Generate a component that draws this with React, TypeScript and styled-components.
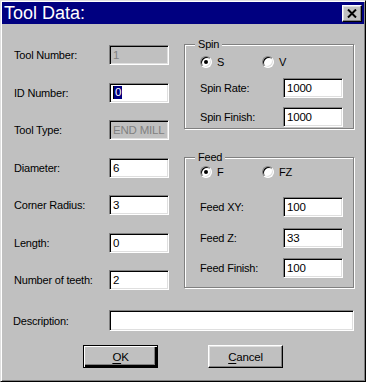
import * as React from "react";
import styled, { createGlobalStyle } from "styled-components";

const GlobalStyle = createGlobalStyle`
  html, body {
    margin: 0;
    padding: 0;
    background: #c0c0c0;
  }
`;

const uiFont = `"Liberation Sans", Arial, sans-serif`;

const Window = styled.div`
  box-sizing: border-box;
  width: 366px;
  height: 382px;
  display: flex;
  flex-direction: column;
  background: #c0c0c0;
  border: 1px solid;
  border-color: #dfdfdf #000 #000 #dfdfdf;
  box-shadow: inset 1px 1px #fff, inset -1px -1px #808080;
  padding: 1px;
  font-family: ${uiFont};
  font-size: 11px;
  letter-spacing: -0.2px;
  color: #000;
`;

const TitleBar = styled.div`
  height: 22px;
  background: #000080;
  display: flex;
  align-items: center;
  justify-content: space-between;
  padding: 0 2px 0 2px;
`;

const Title = styled.span`
  font-size: 18px;
  letter-spacing: 0;
  color: #fff;
  line-height: 22px;
`;

const CloseButton = styled.div`
  box-sizing: border-box;
  width: 20px;
  height: 17px;
  background: #c0c0c0;
  border: 1px solid;
  border-color: #fff #000 #000 #fff;
  box-shadow: inset -1px -1px #808080, inset 1px 1px #dfdfdf;
  display: flex;
  align-items: center;
  justify-content: center;
`;

const Body = styled.div`
  flex: 1;
  display: flex;
  flex-direction: column;
  padding: 0 10px 0 12px;
`;

const Main = styled.div`
  display: flex;
  gap: 15px;
`;

const LeftCol = styled.div`
  display: grid;
  grid-template-columns: 95px 60px;
  grid-auto-rows: 20px;
  row-gap: 17.5px;
  padding-top: 21px;
  align-items: center;
`;

const Label = styled.span`
  line-height: 20px;
  white-space: nowrap;
`;

const Field = styled.div<{ $disabled?: boolean; $width?: number; $height?: number }>`
  box-sizing: border-box;
  width: ${({ $width }) => $width ?? 60}px;
  height: ${({ $height }) => $height ?? 20}px;
  background: ${({ $disabled }) => ($disabled ? "#c0c0c0" : "#fff")};
  color: ${({ $disabled }) => ($disabled ? "#808080" : "#000")};
  border: 1px solid;
  border-color: #808080 #fff #fff #808080;
  box-shadow: inset 1px 1px #000, inset -1px -1px #dfdfdf;
  padding: 0 2px 0 3px;
  line-height: 18px;
  font-size: 11.5px;
  white-space: nowrap;
  overflow: hidden;
`;

const Selected = styled.span`
  display: inline-block;
  vertical-align: top;
  background: #000080;
  color: #fff;
  line-height: 13px;
  padding: 0 1px;
  margin-top: 2px;
  border-left: 1px solid #000;
`;

const RightCol = styled.div`
  width: 170px;
  display: flex;
  flex-direction: column;
  gap: 28px;
  padding-top: 20px;
`;

const Group = styled.div<{ $height: number }>`
  position: relative;
  box-sizing: border-box;
  height: ${({ $height }) => $height}px;
  border: 1px solid #808080;
  box-shadow: inset 1px 1px #fff, 1px 1px #fff;
  display: flex;
  flex-direction: column;
  padding: 0 10px 0 15px;
`;

const Legend = styled.span`
  position: absolute;
  top: -8px;
  left: 10px;
  background: #c0c0c0;
  padding: 0 3px;
  line-height: 14px;
`;

const RadioRow = styled.div<{ $top: number }>`
  display: grid;
  grid-template-columns: 62px auto;
  margin-top: ${({ $top }) => $top}px;
  height: 12px;
  align-items: center;
`;

const RadioItem = styled.div`
  display: flex;
  align-items: center;
  gap: 5px;
  line-height: 12px;
`;

const Radio = styled.span<{ $checked?: boolean }>`
  box-sizing: border-box;
  position: relative;
  width: 12px;
  height: 12px;
  border-radius: 50%;
  background: #fff;
  border: 1px solid;
  border-color: #808080 #fff #fff #808080;
  box-shadow: inset 1px 1px #000, inset -1px -1px #dfdfdf;
  &::after {
    content: "";
    display: ${({ $checked }) => ($checked ? "block" : "none")};
    position: absolute;
    left: 3px;
    top: 3px;
    width: 4px;
    height: 4px;
    border-radius: 50%;
    background: #000;
  }
`;

const GroupRow = styled.div<{ $top: number }>`
  display: flex;
  justify-content: space-between;
  align-items: center;
  height: 20px;
  margin-top: ${({ $top }) => $top}px;
`;

const DescRow = styled.div`
  display: flex;
  align-items: center;
  margin-top: 20px;
  margin-left: -1px;
`;

const DescLabel = styled(Label)`
  width: 96px;
`;

const ButtonRow = styled.div`
  display: flex;
  justify-content: center;
  gap: 50px;
  margin-top: 14px;
  padding-right: 2px;
`;

const Button = styled.div<{ $default?: boolean }>`
  box-sizing: border-box;
  width: 75px;
  height: 23px;
  display: flex;
  align-items: center;
  justify-content: center;
  background: #c0c0c0;
  font-size: 11.5px;
  border: 1px solid;
  border-color: ${({ $default }) =>
    $default ? "#000" : "#fff #000 #000 #fff"};
  box-shadow: ${({ $default }) =>
    $default
      ? "inset 1px 1px #fff, inset -2px -2px #000, inset -3px -3px #808080"
      : "inset -1px -1px #808080, inset 1px 1px #dfdfdf"};
  u {
    text-decoration: underline;
    text-underline-offset: 2px;
  }
`;

const CloseIcon = () => (
  <svg width="10" height="9" viewBox="0 0 10 9">
    <path d="M1 0.5 L9 8.5 M9 0.5 L1 8.5" stroke="#000" strokeWidth="2" />
  </svg>
);

const leftRows: { label: string; value: React.ReactNode; disabled?: boolean }[] = [
  { label: "Tool Number:", value: "1", disabled: true },
  { label: "ID Number:", value: <Selected>0</Selected> },
  { label: "Tool Type:", value: "END MILL", disabled: true },
  { label: "Diameter:", value: "6" },
  { label: "Corner Radius:", value: "3" },
  { label: "Length:", value: "0" },
  { label: "Number of teeth:", value: "2" },
];

export default function App() {
  return (
    <>
      <GlobalStyle />
      <Window>
        <TitleBar>
          <Title>Tool Data:</Title>
          <CloseButton>
            <CloseIcon />
          </CloseButton>
        </TitleBar>
        <Body>
          <Main>
            <LeftCol>
              {leftRows.map(r => (
                <React.Fragment key={r.label}>
                  <Label>{r.label}</Label>
                  <Field $disabled={r.disabled}>{r.value}</Field>
                </React.Fragment>
              ))}
            </LeftCol>
            <RightCol>
              <Group $height={85}>
                <Legend>Spin</Legend>
                <RadioRow $top={11}>
                  <RadioItem>
                    <Radio $checked />S
                  </RadioItem>
                  <RadioItem>
                    <Radio />V
                  </RadioItem>
                </RadioRow>
                <GroupRow $top={10}>
                  <Label>Spin Rate:</Label>
                  <Field>1000</Field>
                </GroupRow>
                <GroupRow $top={9}>
                  <Label>Spin Finish:</Label>
                  <Field>1000</Field>
                </GroupRow>
              </Group>
              <Group $height={131}>
                <Legend>Feed</Legend>
                <RadioRow $top={8}>
                  <RadioItem>
                    <Radio $checked />F
                  </RadioItem>
                  <RadioItem>
                    <Radio />FZ
                  </RadioItem>
                </RadioRow>
                <GroupRow $top={19}>
                  <Label>Feed XY:</Label>
                  <Field>100</Field>
                </GroupRow>
                <GroupRow $top={11}>
                  <Label>Feed Z:</Label>
                  <Field>33</Field>
                </GroupRow>
                <GroupRow $top={10}>
                  <Label>Feed Finish:</Label>
                  <Field>100</Field>
                </GroupRow>
              </Group>
            </RightCol>
          </Main>
          <DescRow>
            <DescLabel>Description:</DescLabel>
            <Field $width={245} $height={21} />
          </DescRow>
          <ButtonRow>
            <Button $default>
              <span>
                <u>O</u>K
              </span>
            </Button>
            <Button>
              <span>
                <u>C</u>ancel
              </span>
            </Button>
          </ButtonRow>
        </Body>
      </Window>
    </>
  );
}
